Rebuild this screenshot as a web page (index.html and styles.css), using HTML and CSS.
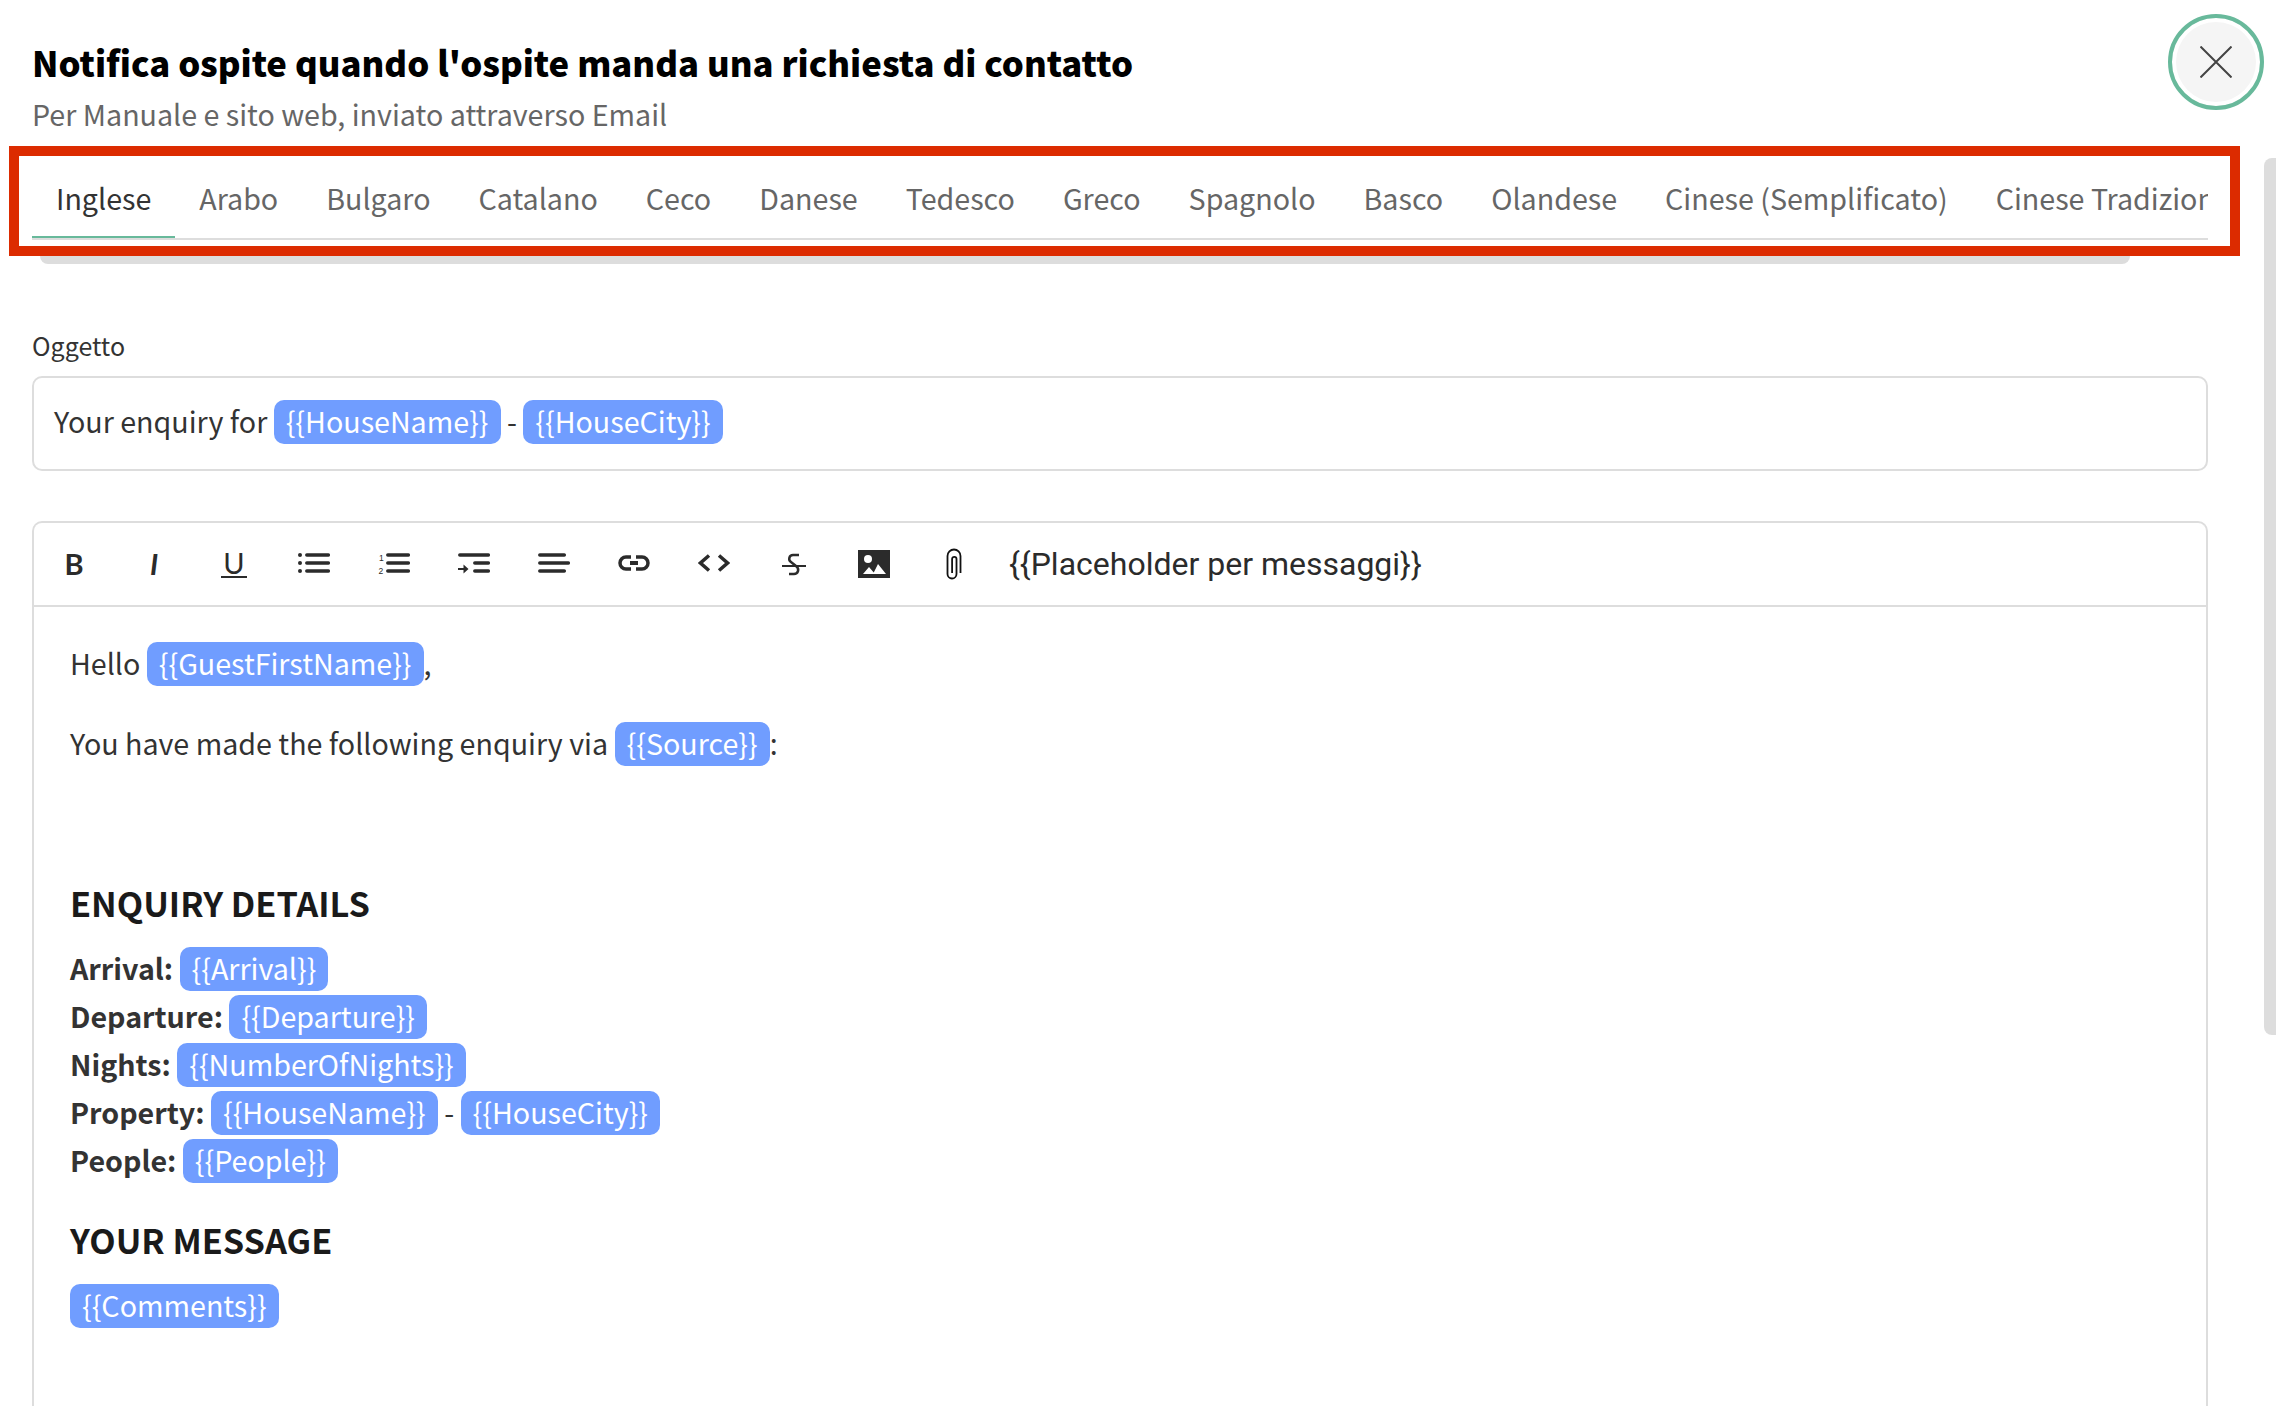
FILE: index.html
```html
<!DOCTYPE html>
<html lang="it">
<head>
<meta charset="utf-8">
<title>Notifica ospite</title>
<link rel="stylesheet" href="styles.css">
</head>
<body>
<div class="page">
  <header class="header">
    <h1 class="title">Notifica ospite quando l'ospite manda una richiesta di contatto</h1>
    <p class="subtitle">Per Manuale e sito web, inviato attraverso Email</p>
  </header>
  <button class="close" aria-label="Chiudi">
    <svg class="close-x" viewBox="0 0 32 32" width="32" height="32"><path d="M0.5 0.5 31.5 31.5M31.5 0.5 0.5 31.5"/></svg>
  </button>
  <div class="scrollbar"></div>
  <div class="highlight">
    <nav class="tabs">
      <span class="tab active">Inglese</span>
      <span class="tab">Arabo</span>
      <span class="tab">Bulgaro</span>
      <span class="tab">Catalano</span>
      <span class="tab">Ceco</span>
      <span class="tab">Danese</span>
      <span class="tab">Tedesco</span>
      <span class="tab">Greco</span>
      <span class="tab">Spagnolo</span>
      <span class="tab">Basco</span>
      <span class="tab">Olandese</span>
      <span class="tab">Cinese (Semplificato)</span>
      <span class="tab">Cinese Tradizionale</span>
    </nav>
  </div>
  <div class="tabs-shadow"></div>
  <label class="label">Oggetto</label>
  <div class="subject">Your enquiry for <span class="chip">{{HouseName}}</span> - <span class="chip">{{HouseCity}}</span></div>
  <section class="editor">
    <div class="toolbar">
      <span class="tool"><span class="glyph glyph-b">B</span></span>
      <span class="tool"><span class="glyph glyph-i">I</span></span>
      <span class="tool"><span class="glyph glyph-u">U</span></span>
      <span class="tool">
        <svg viewBox="0 0 32 24" width="32" height="24" class="ico"><circle cx="2" cy="3" r="2" class="dot"/><circle cx="2" cy="11" r="2" class="dot"/><circle cx="2" cy="19" r="2" class="dot"/><path d="M8.800 3h21.500M8.800 11h21.500M8.800 19h21.500" class="bar"/></svg>
      </span>
      <span class="tool">
        <svg viewBox="0 0 32 24" width="32" height="24" class="ico"><path d="M9.800 3h20.500M9.800 11h20.500M9.800 19h20.500" class="bar"/><text x="1" y="9" class="num">1</text><text x="0.500" y="21.500" class="num">2</text></svg>
      </span>
      <span class="tool">
        <svg viewBox="0 0 32 24" width="32" height="24" class="ico"><path d="M1.800 3h28.500M16.800 11h13.500M16.800 19h13.500" class="bar"/><path d="M0 16h5.500V12.500L10.500 17 5.500 21.500V18H0Z" class="dot"/></svg>
      </span>
      <span class="tool">
        <svg viewBox="0 0 32 24" width="32" height="24" class="ico"><path d="M1.800 3h24.500M1.800 11h28.500M1.800 19h24.500" class="bar"/></svg>
      </span>
      <span class="tool">
        <svg viewBox="0 0 32 24" width="32" height="24" class="ico"><path d="M13 5H8a6 6 0 0 0 0 12h5M18 5h6a6 6 0 0 1 0 12h-6" class="link"/><path d="M12 11h8" class="link-mid"/></svg>
      </span>
      <span class="tool">
        <svg viewBox="0 0 32 24" width="32" height="24" class="ico"><path d="M11 3.500 2.500 11 11 18.500M21 3.500 29.500 11 21 18.500" class="chev"/></svg>
      </span>
      <span class="tool">
        <svg viewBox="0 0 32 24" width="32" height="24" class="ico"><path d="M4 14h24" class="line"/><path d="M21 3h-6c-4 0-5 5-2 7l5 4c4 3 2 8-2 8h-5" class="strike"/></svg>
      </span>
      <span class="tool">
        <svg viewBox="0 0 32 28" width="32" height="28" class="ico"><rect width="32" height="28" class="dot"/><circle cx="10" cy="9" r="4" class="hole"/><path d="M5 24 11 17 17 24ZM15 24 20 14 28 24Z" class="hole"/></svg>
      </span>
      <span class="tool">
        <svg viewBox="0 0 16 32" width="16" height="32" class="ico"><path d="M14.500 25V8a6.500 6.500 0 0 0-13 0v18a4.500 4.500 0 0 0 9 0V11a2.200 2.200 0 0 0-4.400 0v14" class="clip"/></svg>
      </span>
      <span class="placeholder">{{Placeholder per messaggi}}</span>
    </div>
    <div class="content">
      <p class="para">Hello <span class="chip">{{GuestFirstName}}</span>,</p>
      <p class="para">You have made the following enquiry via <span class="chip">{{Source}}</span>:</p>
      <p class="para blank">&nbsp;</p>
      <h3 class="heading">ENQUIRY DETAILS</h3>
      <p class="para">
        <b class="key">Arrival:</b> <span class="chip">{{Arrival}}</span><br>
        <b class="key">Departure:</b> <span class="chip">{{Departure}}</span><br>
        <b class="key">Nights:</b> <span class="chip">{{NumberOfNights}}</span><br>
        <b class="key">Property:</b> <span class="chip">{{HouseName}}</span> - <span class="chip">{{HouseCity}}</span><br>
        <b class="key">People:</b> <span class="chip">{{People}}</span>
      </p>
      <h3 class="heading">YOUR MESSAGE</h3>
      <p class="para"><span class="chip">{{Comments}}</span></p>
    </div>
  </section>
</div>
</body>
</html>
```
FILE: styles.css
```css
* { box-sizing: border-box; }
html, body { margin: 0; padding: 0; background: #fff; }
body { font-family: "Noto Sans CJK SC", "Noto Sans", sans-serif; color: #333; }
.page { position: relative; width: 2276px; height: 1406px; overflow: hidden; }

.header { padding: 38px 0 0 32px; }
.title { margin: 0; font-size: 34.700px; line-height: 48px; font-weight: 900; color: #000; }
.subtitle { margin: 8px 0 0; font-size: 28.650px; line-height: 40px; color: #666; }

.close { position: absolute; left: 2168px; top: 14px; width: 96px; height: 96px; padding: 0; border: 4px solid #68b99b; border-radius: 50%; background: #f5f5f5; box-shadow: inset 0 0 0 4px #fff; display: flex; align-items: center; justify-content: center; }
.close-x { display: block; fill: none; stroke: #444; stroke-width: 2; }
.scrollbar { position: absolute; left: 2264px; top: 158px; width: 12px; height: 877px; background: #ddd; border-radius: 8px 0 0 8px; }

.highlight { margin: 12px 0 0 9px; width: 2231px; height: 110px; border: 10px solid #dc2b00; padding: 0 22px 0 13px; }
.tabs { display: flex; height: 84px; overflow: hidden; border-bottom: 2px solid #ddd; }
.tab { flex: none; padding: 0 24px; height: 84px; line-height: 84px; font-size: 28.650px; color: #666; white-space: nowrap; }
.tab.active { color: #333; border-bottom: 4px solid #68b99b; }
.tabs-shadow { margin-left: 40px; width: 2090px; height: 8px; background: #ddd; border-radius: 0 0 10px 10px; }

.label { display: block; margin: 63px 0 0 32px; font-size: 25px; line-height: 36px; color: #333; }
.subject { margin: 13px 0 0 32px; width: 2176px; height: 95px; padding: 0 20px; border: 2px solid #ddd; border-radius: 10px; font-size: 28.650px; line-height: 86px; color: #333; }

.chip { display: inline-block; height: 44px; line-height: 41px; padding: 0 12px; border-radius: 10px; background: #709dff; color: #fff; }

.editor { margin: 50px 0 0 32px; width: 2176px; height: 885px; border: 2px solid #ddd; border-bottom: 0; border-radius: 10px 10px 0 0; }
.toolbar { display: flex; align-items: center; height: 84px; border-bottom: 2px solid #ddd; }
.tool { flex: none; width: 80px; display: flex; align-items: center; justify-content: center; }
.glyph { display: block; font-family: Lato, sans-serif; font-size: 29px; line-height: 30px; color: #2b2b2b; }
.glyph-b { font-weight: 700; }
.glyph-i { font-style: italic; font-weight: 700; }
.glyph-u { font-weight: 400; padding: 0 2px; line-height: 26px; border-bottom: 2px solid #2b2b2b; }
.ico { display: block; }
.bar { fill: none; stroke: #2b2b2b; stroke-width: 3.500; stroke-linecap: round; }
.dot { fill: #2b2b2b; }
.hole { fill: #fff; }
.num { font-family: "Liberation Sans", sans-serif; font-size: 8.500px; fill: #2b2b2b; }
.link { fill: none; stroke: #2b2b2b; stroke-width: 3.500; }
.link-mid { fill: none; stroke: #2b2b2b; stroke-width: 4; }
.chev { fill: none; stroke: #2b2b2b; stroke-width: 3.500; }
.line { fill: none; stroke: #2b2b2b; stroke-width: 2; }
.strike { fill: none; stroke: #2b2b2b; stroke-width: 2.500; }
.clip { fill: none; stroke: #111; stroke-width: 1.800; }
.placeholder { margin-left: 15px; font-family: Roboto, sans-serif; font-size: 32px; line-height: 40px; color: #2b2b2b; white-space: nowrap; }

.content { padding: 32px 24px 0; font-size: 28.650px; line-height: 48px; color: #333; margin-left: 12px; }
.para { margin: 0 0 32px; }
.heading { margin: 0 0 19px; font-size: 34.300px; line-height: 46px; font-weight: 700; color: #1a1a1a; }
.key { font-weight: 700; }
.blank { height: 48px; }
```
